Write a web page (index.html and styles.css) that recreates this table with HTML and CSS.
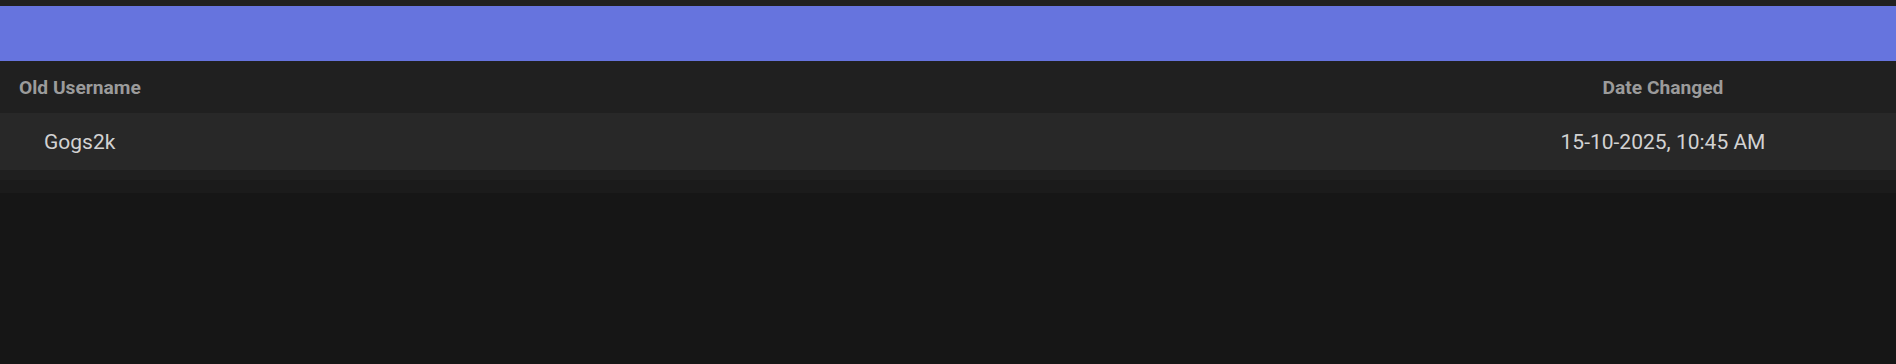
FILE: index.html
```
<html>
    <head>
        <meta name="viewport" content="width=device-width, initial-scale=1.0">
        <link rel="stylesheet" href="styles.css">
    </head>
    <body>
        <div class="panel">
            <div class="banner"></div>
            <div class="history">
                <div class="row head">
                    <div class="cell name">Old Username</div>
                    <div class="cell date">Date Changed</div>
                </div>
                <div class="row entry">
                    <div class="cell name">Gogs2k</div>
                    <div class="cell date">15-10-2025, 10:45 AM</div>
                </div>
            </div>
            <div class="footer-strip"></div>
            <div class="footer-shade"></div>
        </div>
    </body>
</html>
```

FILE: styles.css
```
html, body {
    margin: 0;
    padding: 0;
    background: #161616;
    font-family: Roboto, "Liberation Sans", sans-serif;
}
.panel {
    padding-top: 6px;
    background: #212121;
}
.banner {
    height: 55px;
    background: #6674de;
}
.row {
    display: grid;
    grid-template-columns: 1fr 466px;
    align-items: center;
}
.head {
    height: 52px;
    background: #202020;
    color: #9b9b9b;
    font-weight: bold;
    font-size: 19.2px;
}
.head .name {
    padding-left: 19px;
}
.entry {
    height: 57px;
    background: #282828;
    color: #d2d2d2;
    font-size: 21px;
}
.entry .name {
    padding-left: 44px;
}
.date {
    text-align: center;
}
.footer-strip {
    height: 10px;
    background: #1f1f1f;
}
.footer-shade {
    height: 13px;
    background: #1b1b1b;
}
```
